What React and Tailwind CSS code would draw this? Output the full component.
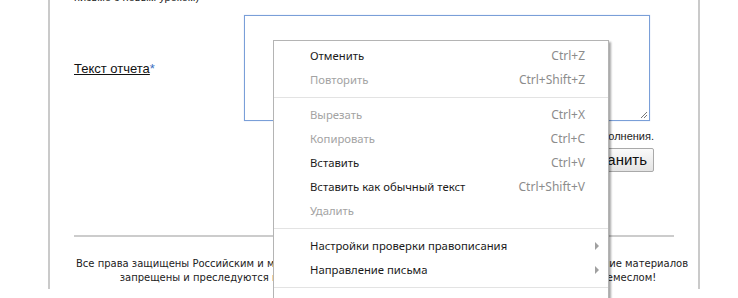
import React from "react";

const MENU = [
  { label: "Отменить", key: "Ctrl+Z" },
  { label: "Повторить", key: "Ctrl+Shift+Z", off: true },
  { sep: true },
  { label: "Вырезать", key: "Ctrl+X", off: true },
  { label: "Копировать", key: "Ctrl+C", off: true },
  { label: "Вставить", key: "Ctrl+V" },
  { label: "Вставить как обычный текст", key: "Ctrl+Shift+V" },
  { label: "Удалить", off: true },
  { sep: true },
  { label: "Настройки проверки правописания", sub: true },
  { label: "Направление письма", sub: true },
  { sep: true },
  { label: "Проверить элемент" },
];

function ContextMenu() {
  return (
    <div className="absolute left-[273px] top-[40px] w-[336px] bg-white border border-[#b4b4b4] py-[3px] shadow-[2px_2px_2px_rgba(0,0,0,0.35)] font-['Noto_Sans',sans-serif] text-[11.3px]">
      {MENU.map((m, i) =>
        m.sep ? (
          <div key={i} className="h-[11px] flex items-center">
            <div className="h-px w-full bg-[#e3e3e3]" />
          </div>
        ) : (
          <div key={i} className="relative h-[24px] flex items-center pl-[36px] pr-[23px]">
            <span className={m.off ? "text-[#a3a3a3]" : "text-[#1a1a1a]"}>{m.label}</span>
            {m.key && <span className="ml-auto text-[12px] text-[#8c8c8c]">{m.key}</span>}
            {m.sub && (
              <svg className="absolute left-[321px] top-[8px]" width="5" height="8" viewBox="0 0 5 8">
                <path d="M0 0 L4 4 L0 8 Z" fill="#a0a0a0" />
              </svg>
            )}
          </div>
        )
      )}
    </div>
  );
}

export default function App() {
  return (
    <div className="relative h-[298px] w-[738px] overflow-hidden bg-white font-['Liberation_Sans',Arial,sans-serif]">
      <div className="ml-[48px] w-[652px] h-full border-x-2 border-[#cacaca] px-6">
        <div className="-mt-[9px] h-[12px] text-[11px] leading-[12px] text-[#222]">письмо с новым уроком)</div>

        <div className="flex mt-[12px]">
          <div className="w-[170px] pt-[44px] text-[13px] text-[#111]">
            <span className="underline">Текст отчета</span>
            <span className="text-[#3a6fc0]">*</span>
          </div>
          <div className="w-[410px]">
            <div className="relative w-[406px] h-[106px] border border-[#7a9fd8] shadow-[0_0_1px_rgba(90,140,220,0.4)]">
              <svg className="absolute right-[1px] bottom-[1px]" width="8" height="8" viewBox="0 0 8 8">
                <path d="M7 1 L1 7 M7 4 L4 7" stroke="#777" strokeWidth="1" />
              </svg>
            </div>
            <div className="mt-[9px] text-right text-[11px] leading-[13px] text-[#222]">
              * Поле обязательно для заполнения.
            </div>
            <div className="mt-[5px] flex justify-end">
              <button className="h-[24px] px-[6px] border border-[#a9a9a9] rounded-[2px] bg-gradient-to-b from-[#fafafa] to-[#e4e4e4] text-[15px] leading-[20px] text-[#111]">
                Сохранить
              </button>
            </div>
          </div>
        </div>

        <div className="mt-[63px] h-[2px] bg-[#cccccc]" />

        <div className="-mx-6 mt-[20px] flex flex-col items-center font-['DejaVu_Sans',Verdana,sans-serif] text-[10px] leading-[14px] text-[#222]">
          <div className="whitespace-nowrap pl-[16px]">
            Все права защищены Российским и международным законом. Любое копирование и распространение материалов
          </div>
          <div className="whitespace-nowrap pl-[28px]">
            запрещены и преследуются по закону РФ. Уважайте чужой труд и не пользуйтесь чужим ремеслом!
          </div>
        </div>
      </div>

      <ContextMenu />
    </div>
  );
}
